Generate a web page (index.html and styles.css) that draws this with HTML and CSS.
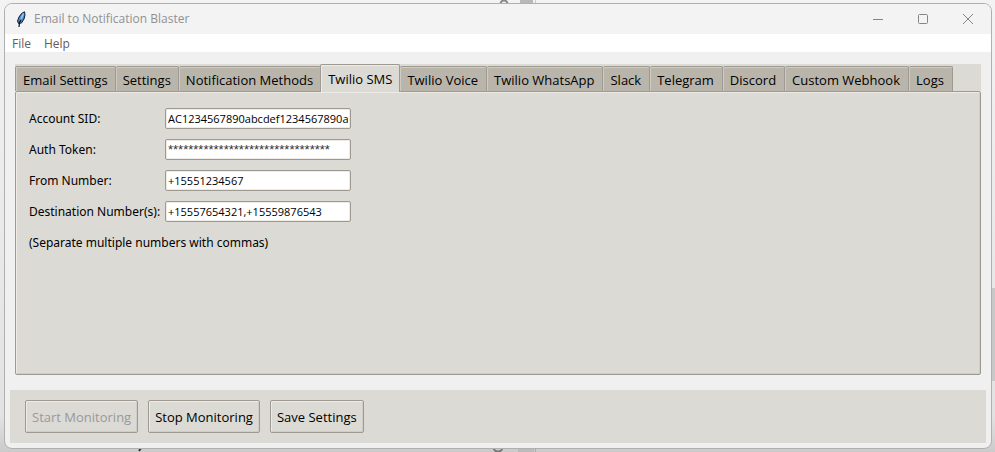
FILE: index.html
```html
<!DOCTYPE html>
<html lang="en">
<head>
<meta charset="utf-8">
<title>Email to Notification Blaster</title>
<link rel="stylesheet" href="styles.css">
</head>
<body>
<div class="backdrop" aria-hidden="true">
  <svg class="behind-top" viewBox="0 0 60 4"><circle cx="24" cy="4" r="3.5" fill="none" stroke="#888" stroke-width="2"/><path fill="#b8b8b8" d="M40 0h13v4H40z"/><path fill="#ccc" d="M55 0h1v4h-1z"/></svg>
  <svg class="behind-bottom" viewBox="0 0 420 4"><path d="M415.500 0v4" stroke="#aaa"/><path fill="#bbb" d="M398 0h16v4h-16z"/><path d="M21 0l-2 3" stroke="#333" stroke-width="2"/><circle cx="378" cy="-1" r="4.500" fill="none" stroke="#777" stroke-width="2"/></svg>
  <span class="behind-right"></span>
</div>
<div class="window">
  <header class="titlebar">
    <svg class="feather" viewBox="0 0 10 17"><path d="M8.500.8 5.500 2.500 3 6 1.500 10l1 2.500L5.500 12 8 8l1-4z" fill="#4a8ad8" stroke="#14202f"/><path d="M7.500 2.500 5 8" stroke="#9cc8f4" stroke-width="1.500"/><path d="M5 9 3.500 11.500 3 16" fill="none" stroke="#111" stroke-width="1.200"/></svg>
    <h1 class="title">Email to Notification Blaster</h1>
    <div class="controls">
      <button class="control" aria-label="Minimize"><svg viewBox="0 0 12 12"><path d="M1 6.500h10"/></svg></button>
      <button class="control" aria-label="Maximize"><svg viewBox="0 0 12 12"><rect x="1.500" y="1.500" width="9" height="9" rx="1"/></svg></button>
      <button class="control" aria-label="Close"><svg viewBox="0 0 12 12"><path d="m1 1 10 10M11 1 1 11"/></svg></button>
    </div>
  </header>
  <nav class="menubar"><button class="menu">File</button><button class="menu">Help</button></nav>
  <main class="notebook">
    <div class="tabs" role="tablist">
      <button class="tab" role="tab">Email Settings</button>
      <button class="tab" role="tab">Settings</button>
      <button class="tab" role="tab">Notification Methods</button>
      <button class="tab selected" role="tab" aria-selected="true">Twilio SMS</button>
      <button class="tab" role="tab">Twilio Voice</button>
      <button class="tab" role="tab">Twilio WhatsApp</button>
      <button class="tab" role="tab">Slack</button>
      <button class="tab" role="tab">Telegram</button>
      <button class="tab" role="tab">Discord</button>
      <button class="tab" role="tab">Custom Webhook</button>
      <button class="tab" role="tab">Logs</button>
    </div>
    <form class="pane">
      <label for="sid">Account SID:</label><input class="entry" id="sid" value="AC1234567890abcdef1234567890abcdef">
      <label for="token">Auth Token:</label><input class="entry masked" id="token" value="********************************">
      <label for="from">From Number:</label><input class="entry" id="from" value="+15551234567">
      <label for="dest">Destination Number(s):</label><input class="entry" id="dest" value="+15557654321,+15559876543">
      <p class="hint">(Separate multiple numbers with commas)</p>
    </form>
  </main>
  <footer class="actions">
    <button class="action" disabled>Start Monitoring</button>
    <button class="action">Stop Monitoring</button>
    <button class="action">Save Settings</button>
  </footer>
</div>
</body>
</html>
```
FILE: styles.css
```css
* { box-sizing: border-box; }
body {
  margin: 0;
  height: 100vh;
  padding: 3px 3px 3px 4px;
  display: flex;
  overflow: hidden;
  background: linear-gradient(#f3f3f3, #e2e2e2 92%, #cbcbcb);
  font: 13px/18px "Open Sans", "Noto Sans", sans-serif;
  color: #000;
}
button, input { font: inherit; color: inherit; }
.backdrop svg, .behind-right { position: absolute; }
.behind-top { left: 480px; top: 0; width: 60px; height: 4px; }
.behind-bottom { left: 120px; bottom: 0; width: 420px; height: 4px; }
.behind-right { right: 0; top: 288px; width: 4px; height: 93px; background: #c8c8c8; }
.window {
  position: relative;
  flex: 1;
  min-width: 0;
  display: flex;
  flex-direction: column;
  overflow: hidden;
  border: 1px solid #b0b0b0;
  border-radius: 8px;
  background: #f0f0f0;
}
.titlebar {
  height: 30px;
  display: flex;
  align-items: center;
  padding: 0 1px 0 11px;
  background: #f3f3f3;
}
.feather { width: 10px; height: 17px; }
.title { margin: 0 0 0 8px; font-size: 12px; font-weight: 400; color: #919191; }
.controls { margin-left: auto; display: flex; }
.control { width: 45px; height: 30px; padding: 0; border: 0; background: none; }
.control svg { display: block; margin: auto; width: 12px; height: 12px; fill: none; stroke: #858585; }
.menubar { height: 18px; display: flex; gap: 13px; padding: 1px 7px 0; background: #fff; }
.menu { padding: 0; border: 0; background: none; font-size: 12px; color: #606060; }
.notebook { flex: 1; display: flex; flex-direction: column; margin: 12px 10px 15px; }
.tabs { display: flex; align-items: flex-end; height: 27px; background: #dcdad5; }
.tab {
  height: 25px;
  padding: 2px 7px 0;
  border: solid #9e9a91;
  border-width: 1px 1px 0 0;
  border-radius: 2px 2px 0 0;
  background: #bab5ab;
  box-shadow: inset 1px 1px #cfcbc3;
  white-space: nowrap;
}
.tab:first-child { border-left-width: 1px; }
.tab.selected {
  position: relative;
  height: 28px;
  margin: 0 0 -1px -1px;
  padding: 2px 7px 1px;
  border-left-width: 1px;
  background: #dcdad5;
  box-shadow: inset 1px 1px #eeebe7;
}
.tab.selected ~ .tab { padding-right: 8px; }
.pane {
  flex: 1;
  display: grid;
  grid-template-columns: 136px 186px;
  grid-auto-rows: 21px;
  align-content: start;
  align-items: center;
  row-gap: 10px;
  padding: 16px 13px;
  border: 1px solid #9e9a91;
  border-radius: 2px;
  background: #dcdad5;
  box-shadow: inset 1px 1px #eeebe7, inset -1px -1px #cfcdc8;
}
.pane label, .hint { font-family: "Noto Sans", sans-serif; font-size: 12px; white-space: nowrap; }
.entry {
  width: 100%;
  height: 21px;
  padding: 0 2px;
  border: 1px solid #9e9a91;
  border-radius: 2px;
  background: #fff;
  box-shadow: inset 0 0 0 1px #eeebe7;
  font-size: 11px;
  outline: 0;
}
.masked { font-family: "Liberation Sans", sans-serif; font-size: 13px; color: #333; }
.hint { grid-column: 1 / -1; margin: 0; }
.actions {
  display: flex;
  gap: 10px;
  margin: 0 5px 5px;
  padding: 10px 15px;
  background: #dcdad5;
}
.action {
  height: 33px;
  padding: 0 6px;
  border: 1px solid #9e9a91;
  border-radius: 2px;
  background: #dcdad5;
  box-shadow: inset 1px 1px #eeebe7, inset -1px -1px #cfcdc8;
}
.action:disabled { color: #999; }
```
